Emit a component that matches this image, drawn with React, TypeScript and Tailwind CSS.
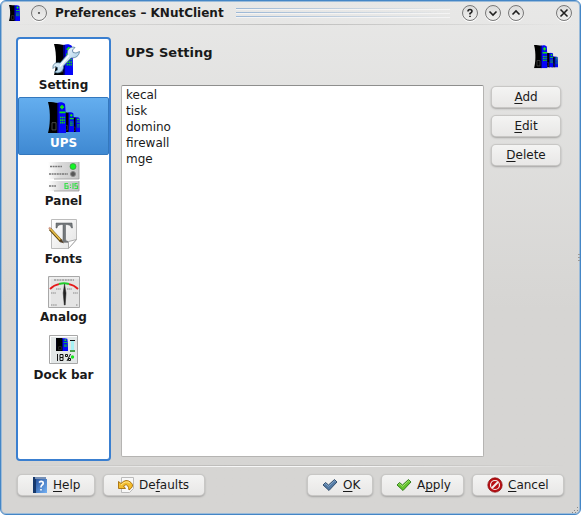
import React, { useState } from "react";

function Tower({ x, y, w, h }: { x: number; y: number; w: number; h: number }) {
  return (
    <svg x={x} y={y} width={w} height={h} viewBox="0 0 18 30" preserveAspectRatio="none">
      <path d="M0 0C4 0 7 .5 10 1V30H0C2 24 3 10 0 0Z" fill="#000" />
      <path d="M9 1C12 0 15 0 17 2C18 10 18 22 18 30H9.500Z" fill="#0505f8" />
      <path d="M9 1V30H10.500V1Z" fill="#000078" />
      <path d="M12 5h4M14 3v4M11.500 10h6" stroke="#16e516" strokeWidth="1.700" />
      <path d="M12 15h5M12 17.500h5M12 20h5" stroke="#16d516" strokeWidth="1.600" strokeDasharray="1.300 .5" />
      <path d="M4 20h4v7H4Z" fill="none" stroke="#555" strokeWidth=".8" />
    </svg>
  );
}

function UpsIcon({ size }: { size: number }) {
  return (
    <svg width={size} height={size} viewBox="0 0 32 32" aria-hidden="true">
      <Tower x={23} y={15} w={9} h={15} />
      <Tower x={14} y={10} w={12} h={20} />
      <Tower x={0} y={0} w={18} h={31} />
    </svg>
  );
}

function SettingIcon() {
  return (
    <svg width="32" height="32" viewBox="0 0 32 32" aria-hidden="true">
      <defs>
        <linearGradient id="wrench" x1="0" y1="0" x2="1" y2="1">
          <stop offset="0" stopColor="#fff" />
          <stop offset=".5" stopColor="#cde4f3" />
          <stop offset="1" stopColor="#73aad0" />
        </linearGradient>
      </defs>
      <Tower x={6} y={0} w={19} h={31} />
      <path
        d="M5 22C6 19 9 18 12 19L19.500 10.500C19 6 21 3.500 25 3L27 3.500L24.500 6L25 8.500L28 9L31.500 7.500C31 12 28 14 23 14L15.500 22C16 26 13 29 9 29L6.500 28L9.500 26L9.500 23.500L7 22.500L5 24.500Z"
        fill="url(#wrench)" stroke="#45718e" strokeWidth=".7"
      />
      <path d="M12 22.500L21 11.500" stroke="#fff" strokeWidth="1.300" />
    </svg>
  );
}

function PanelIcon() {
  return (
    <svg width="32" height="32" viewBox="0 0 32 32" aria-hidden="true">
      <defs>
        <linearGradient id="plate">
          <stop offset="0" stopColor="#fff" />
          <stop offset=".4" stopColor="#dadada" />
          <stop offset="1" stopColor="#c6c6c6" />
        </linearGradient>
      </defs>
      <path d="M0 2h31v17H0ZM0 21h31v10H0Z" fill="url(#plate)" />
      <path d="M6 19h25V2M6 31h25V21" fill="none" stroke="#999" strokeWidth=".8" />
      <path d="M2 6.500h12M1 14h19M1 26h7" stroke="#777" strokeWidth="1.500" strokeDasharray="2 .6" />
      <circle cx="25" cy="6.500" r="3" fill="#13f525" stroke="#398b40" strokeWidth=".7" />
      <circle cx="25" cy="14" r="2.500" fill="#555" stroke="#888" />
      <path d="M20 23.500h-3v5h3v-2.500h-3M22.500 24.500v1M22.500 27v1M25 23v6M29.500 23.500h-2.500v2.500h2.500v2.500h-3" fill="none" stroke="#38e149" strokeWidth="1.100" />
    </svg>
  );
}

function FontsIcon() {
  return (
    <svg width="32" height="32" viewBox="0 0 32 32" aria-hidden="true">
      <defs>
        <linearGradient id="paper" x2="1" y2="1">
          <stop stopColor="#fff" />
          <stop offset="1" stopColor="#e4e4e4" />
        </linearGradient>
      </defs>
      <path d="M3.500 1.500h25v20l-8 9h-17Z" fill="url(#paper)" stroke="#bcbcbc" />
      <path d="M28.500 21.500L20.500 30.500V23.500Z" fill="#fff" stroke="#aaa" />
      <path d="M8 5h16l.5 5h-1C23 7.500 21 6.500 17.500 6.500V21q0 2.500 2.500 2.500v.8H12.500v-.8q2.500 0 2.500-2.500V6.500C11 6.500 9.500 7.500 9 10H8Z" fill="#74797c" stroke="#505558" strokeWidth=".5" />
      <path d="M2 11L13 23" stroke="#604708" strokeWidth="3" />
      <path d="M2 10.500L12.500 22" stroke="#e6bd4b" strokeWidth="1.800" />
      <path d="M13 21L16 25.500L11 23Z" fill="#533c20" />
      <path d="M1 9.500l1.500 1.500" stroke="#d29b88" strokeWidth="2.300" />
    </svg>
  );
}

function AnalogIcon() {
  return (
    <svg width="32" height="32" viewBox="0 0 32 32" aria-hidden="true">
      <path d="M.5.500h31v31H.5Z" fill="#e4e4e4" stroke="#a8a8a8" />
      <path d="M2 31V2h29" fill="none" stroke="#f8f8f8" />
      <path d="M6 4h20" stroke="#777" strokeDasharray="2 .7" />
      <path d="M2 13Q6 9 11 8.200M21 8.200Q26 9 30 13" fill="none" stroke="#e51b1b" strokeWidth="1.800" />
      <path d="M11 8Q16 6.500 21 8" fill="none" stroke="#21cc2a" strokeWidth="2" />
      <path d="M8 13h5M19 13h5M3 17h5M25 17h5M3 29h6M28 29h2" stroke="#888" strokeDasharray="1.500 .6" />
      <path d="M16.500 8L18 17L17.200 29H16.300L15.200 17Z" fill="#222" stroke="#222" strokeWidth=".5" />
    </svg>
  );
}

function DockIcon() {
  return (
    <svg width="32" height="32" viewBox="0 0 32 32" aria-hidden="true">
      <path d="M1.500 1.500h28v28h-28Z" fill="#e3e7e7" stroke="#a8a8a8" />
      <path d="M2.500 29V2.500H29" stroke="#fff" fill="none" />
      <path d="M8 4h6v13H8Z" fill="#05051a" />
      <Tower x={8} y={4} w={12} h={13} />
      <path d="M23 7h3v9h-3Z" fill="#a7f2f5" />
      <path d="M22 6.500h5" stroke="#111" />
      <path d="M22 17h5" stroke="#148c14" strokeWidth="1.500" />
      <path d="M9.500 20v7M12 20.500h3v3h-3ZM12 23.500v3h3v-3M22.500 20l-3.500 7M17.500 20.500h2v2h-2ZM20.500 24.500h2v2h-2Z" stroke="#111" fill="none" />
      <circle cx="24.500" cy="23" r="1.700" fill="#17e51d" />
    </svg>
  );
}

function HelpIcon() {
  return (
    <svg width="16" height="16" viewBox="0 0 16 16" aria-hidden="true">
      <defs>
        <linearGradient id="book" x2="1" y2="1">
          <stop stopColor="#2855a0" />
          <stop offset="1" stopColor="#75b2f4" />
        </linearGradient>
      </defs>
      <path d="M1 0h13v16H1Z" fill="#17396c" />
      <path d="M3 1h11" stroke="#dceafe" />
      <path d="M4 2h11v14H4Z" fill="url(#book)" />
      <path d="M7 5.500Q9 3.500 11 5q1 2-1.500 3.500Q9 9 9 10.500M9 12v1.500" fill="none" stroke="#fff" strokeWidth="1.600" />
    </svg>
  );
}

function UndoIcon() {
  return (
    <svg width="16" height="16" viewBox="0 0 16 16" aria-hidden="true">
      <path d="M3.500.500h12v11l-4 4h-8Z" fill="#f8f8f8" stroke="#bbb" />
      <path d="M.5 4.500V11.500H7.500L5.500 9Q9 6 10.500 10.500L11 13Q17 9 13 5.500Q8 1 3 6.500Z" fill="#f4bd2d" stroke="#a56d09" strokeWidth=".9" />
      <path d="M3 8Q8 3 12 6" fill="none" stroke="#ffe78d" />
    </svg>
  );
}

function CheckIcon({ fill, edge, shine }: { fill: string; edge: string; shine: string }) {
  return (
    <svg width="16" height="16" viewBox="0 0 16 16" aria-hidden="true">
      <path d="M1 8L3.500 5.500L6.500 8L12.500 2.500L15 5L7 13.500Z" fill={fill} stroke={edge} strokeWidth=".9" strokeLinejoin="round" />
      <path d="M2.500 7.700L3.500 6.700L6.500 9.300L12.500 3.800L13.500 4.800" fill="none" stroke={shine} strokeWidth=".8" />
    </svg>
  );
}

function CancelIcon() {
  return (
    <svg width="16" height="16" viewBox="0 0 16 16" aria-hidden="true">
      <circle cx="8" cy="8" r="7.200" fill="#b80f13" stroke="#830b0f" strokeWidth=".7" />
      <circle cx="8" cy="8" r="4.500" fill="#b80f13" stroke="#f5efed" strokeWidth="1.200" />
      <path d="M5 11L11 5" stroke="#f5efed" strokeWidth="1.900" />
    </svg>
  );
}

function TitleButton({ label, children }: { label: string; children: React.ReactNode }) {
  return (
    <button
      type="button"
      aria-label={label}
      className="size-4 shrink-0 rounded-full border border-[#777] bg-linear-to-b from-[#dcdcdb] to-[#f0f0ef] shadow-[0_1px_0_#fff]"
    >
      <svg viewBox="0 0 14 14" className="size-full" fill="none" stroke="#202020" strokeWidth="1.600">
        {children}
      </svg>
    </button>
  );
}

function PushButton({ before = "", hot, after, icon, className = "" }: {
  before?: string; hot: string; after: string; icon?: React.ReactNode; className?: string;
}) {
  return (
    <button
      type="button"
      className={`flex h-5 items-center rounded-sm bg-linear-to-b from-[#f4f4f3] to-[#e8e7e6] whitespace-nowrap shadow-[0_0_0_1px_#c8c7c5,0_1px_2px_1px_#a4a3a2] ${className}`}
    >
      {icon}
      <span>
        {before}
        <span className="underline underline-offset-2 [text-decoration-skip-ink:none]">{hot}</span>
        {after}
      </span>
    </button>
  );
}

const pages = [
  { name: "Setting", icon: <SettingIcon /> },
  { name: "UPS", icon: <UpsIcon size={32} /> },
  { name: "Panel", icon: <PanelIcon /> },
  { name: "Fonts", icon: <FontsIcon /> },
  { name: "Analog", icon: <AnalogIcon /> },
  { name: "Dock bar", icon: <DockIcon /> },
];

const devices = ["kecal", "tisk", "domino", "firewall", "mge"];

export default function App() {
  const [page, setPage] = useState("UPS");
  return (
    <div className="relative flex min-h-screen flex-col rounded-md border border-[#4486c6] bg-linear-to-b from-[#e8e8e7] to-[#d6d5d3] to-60% font-['DejaVu_Sans',sans-serif] text-xs text-[#1a1a1a] shadow-[inset_0_0_0_1px_#9bbbd9]">
      <header className="flex h-[23px] items-center px-2">
        <svg width="12" height="16" viewBox="0 0 12 16" aria-hidden="true">
          <Tower x={0} y={0} w={11} h={16} />
        </svg>
        <div className="ml-2.5 flex">
          <TitleButton label="Window menu">
            <circle cx="7" cy="7" r=".3" />
          </TitleButton>
        </div>
        <h1 className="ml-2 text-xs font-bold whitespace-nowrap">Preferences – KNutClient</h1>
        <div className="mr-3 ml-3 flex flex-1 flex-col gap-[3px]">
          <div className="h-px bg-linear-to-r from-[#9cb8d6] to-transparent shadow-[0_1px_0_#f4f4f4]" />
          <div className="h-px bg-linear-to-r from-[#9cb8d6] to-transparent shadow-[0_1px_0_#f4f4f4]" />
          <div className="h-px bg-linear-to-r from-[#9cb8d6] to-transparent shadow-[0_1px_0_#f4f4f4]" />
        </div>
        <div className="flex gap-[7px]">
          <TitleButton label="Help">
            <path d="M5 5.500Q5 3.500 7 3.500Q9 3.500 9 5.200Q9 6.300 7 7.500V8.500M7 9.800V11" />
          </TitleButton>
          <TitleButton label="Minimize">
            <path d="M3.500 5.500L7 9L10.500 5.500" />
          </TitleButton>
          <TitleButton label="Maximize">
            <path d="M3.500 8.500L7 5L10.500 8.500" />
          </TitleButton>
        </div>
        <div className="ml-8 flex">
          <TitleButton label="Close">
            <path d="M3.500 3.500L10.500 10.500M10.500 3.500L3.500 10.500" />
          </TitleButton>
        </div>
      </header>
      <div className="mx-1 h-px bg-linear-to-r from-transparent via-[#bebebd] to-transparent" />
      <main className="flex flex-1 pt-3 pr-5 pl-[15px]">
        <nav aria-label="Preference pages" className="flex w-[95px] flex-col rounded-sm border-2 border-[#3a7fd0] bg-white">
          {pages.map((p) => (
            <button
              key={p.name}
              type="button"
              onClick={() => setPage(p.name)}
              aria-current={page === p.name ? "page" : undefined}
              className={`flex h-[58px] flex-col items-center gap-px rounded-xs border pt-1 font-bold leading-4 ${
                page === p.name
                  ? "border-[#3478bd] bg-linear-to-b from-[#64aeef] to-[#3f89d2] text-white"
                  : "border-transparent"
              }`}
            >
              {p.icon}
              <span className="whitespace-nowrap">{p.name}</span>
            </button>
          ))}
        </nav>
        <section className="ml-2.5 flex flex-1 flex-col pb-1">
          <div className="flex h-12 items-start justify-between pt-2 pr-0.5 pl-1">
            <h2 className="text-[13px] font-bold leading-4">UPS Setting</h2>
            <UpsIcon size={24} />
          </div>
          <div className="flex flex-1 gap-2">
            <ul role="listbox" aria-label="UPS list" className="flex-1 rounded-xs border border-[#b5b4b2] border-t-[#8e8e8d] bg-white pt-px pl-1 leading-4">
              {devices.map((d) => (
                <li key={d} role="option" aria-selected={false}>{d}</li>
              ))}
            </ul>
            <div className="flex w-[68px] flex-col gap-[9px] pt-0.5">
              <PushButton hot="A" after="dd" className="justify-center" />
              <PushButton hot="E" after="dit" className="justify-center" />
              <PushButton hot="D" after="elete" className="justify-center" />
            </div>
          </div>
        </section>
      </main>
      <div className="mx-4 mt-1 h-0.5 border-t border-b border-t-[#bcbbb9] border-b-[#f8f8f8] [mask-image:linear-gradient(to_right,transparent,black_40%,black_60%,transparent)]" />
      <footer className="flex px-[17px] pt-2 pb-[19px]">
        <PushButton hot="H" after="elp" icon={<HelpIcon />} className="w-[76px] gap-[5px] pl-3.5" />
        <PushButton before="De" hot="f" after="aults" icon={<UndoIcon />} className="ml-2.5 w-[100px] gap-[5px] pl-3.5" />
        <div className="ml-auto flex gap-2.5">
          <PushButton hot="O" after="K" icon={<CheckIcon fill="#537aa4" edge="#294564" shine="#8fb0d1" />} className="w-16 gap-[5px] pl-3.5" />
          <PushButton before="A" hot="p" after="ply" icon={<CheckIcon fill="#65c32f" edge="#287613" shine="#b2ec85" />} className="w-[81px] gap-[5px] pl-3.5" />
          <PushButton hot="C" after="ancel" icon={<CancelIcon />} className="w-[90px] gap-[5px] pl-3.5" />
        </div>
      </footer>
      <svg width="3" height="9" viewBox="0 0 3 9" className="absolute top-1/2 right-0 -translate-y-1" aria-hidden="true">
        <path d="M1 0h2v1H1ZM1 3h2v1H1ZM1 6h2v1H1Z" fill="#999" />
      </svg>
      <svg width="8" height="8" viewBox="0 0 8 8" className="absolute right-0 bottom-0" aria-hidden="true">
        <path d="M5 1h1v1H5ZM2 4h1v1H2ZM5 4h1v1H5ZM0 6h1v1H0ZM3 6h1v1H3Z" fill="#888" />
      </svg>
    </div>
  );
}
